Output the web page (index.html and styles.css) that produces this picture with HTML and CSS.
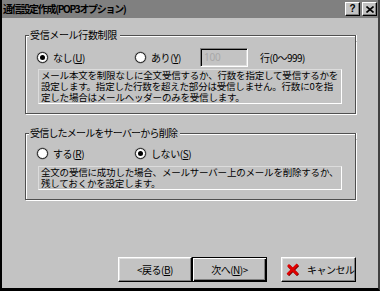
FILE: index.html
```html
<!DOCTYPE html>
<html lang="ja">
<head>
<meta charset="utf-8">
<title>通信設定作成(POP3オプション)</title>
<link rel="stylesheet" href="styles.css">
</head>
<body>
<div class="window">
  <div class="titlebar">
    <span class="title">通信設定作成(POP3オプション)</span>
    <div class="tbtns">
      <span class="tbtn">?</span>
      <span class="tbtn">
        <svg width="8" height="7" viewBox="0 0 8 7"><path d="M0.5 0.5 L7.5 6.5 M7.5 0.5 L0.5 6.5" stroke="#000" stroke-width="1.6" fill="none"/></svg>
      </span>
    </div>
  </div>
  <div class="body">
    <section class="group g1">
      <div class="ghead"><span class="corner"></span><span class="gtitle">受信メール行数制限</span><span class="gline"></span></div>
      <div class="gbox">
        <div class="row r1">
          <label class="radio w1"><span class="dot checked"></span><span class="lbl">なし(<u>U</u>)</span></label>
          <label class="radio w2"><span class="dot"></span><span class="lbl">あり(<u>Y</u>)</span></label>
          <span class="input">100</span>
          <span class="unit">行(0〜999)</span>
        </div>
        <div class="desc">メール本文を制限なしに全文受信するか、行数を指定して受信するかを<br>設定します。指定した行数を超えた部分は受信しません。行数に0を指<br>定した場合はメールヘッダーのみを受信します。</div>
      </div>
    </section>
    <section class="group g2">
      <div class="ghead"><span class="corner"></span><span class="gtitle">受信したメールをサーバーから削除</span><span class="gline"></span></div>
      <div class="gbox">
        <div class="row r2">
          <label class="radio w1"><span class="dot"></span><span class="lbl">する(<u>R</u>)</span></label>
          <label class="radio w2"><span class="dot checked"></span><span class="lbl">しない(<u>S</u>)</span></label>
        </div>
        <div class="desc">全文の受信に成功した場合、メールサーバー上のメールを削除するか、<br>残しておくかを設定します。</div>
      </div>
    </section>
    <div class="footer">
      <button class="btn back"><span>&lt;戻る(<u>B</u>)</span></button>
      <button class="btn next"><span>次へ(<u>N</u>)&gt;</span></button>
      <button class="btn cancel">
        <svg class="xicon" width="13" height="13" viewBox="0 0 13 13"><path d="M2 2 L11.5 11.5 M11.5 1.5 L1.5 11.5" stroke="#7a0000" stroke-width="3" fill="none" transform="translate(0.6 0.6)"/><path d="M2 2 L11.5 11.5 M11.5 1.5 L1.5 11.5" stroke="#e00000" stroke-width="2.6" fill="none"/></svg>
        <span>キャンセル</span>
      </button>
    </div>
  </div>
</div>
</body>
</html>
```

FILE: styles.css
```css
html, body {
  margin: 0;
  padding: 0;
}

body {
  width: 380px;
  height: 291px;
  overflow: hidden;
  background: #c3c3c3;
  font-family: "Noto Sans CJK JP", "Noto Sans", sans-serif;
  font-size: 10px;
  color: #000;
  letter-spacing: -0.5px;
}

.window {
  box-sizing: border-box;
  width: 380px;
  height: 291px;
  background: #c3c3c3;
  border-left: 2px solid #000;
  border-right: 2px solid #404040;
  border-bottom: 3px solid #000;
  display: flex;
  flex-direction: column;
}

.titlebar {
  height: 18px;
  flex: none;
  background: #808080;
  display: flex;
  align-items: center;
  justify-content: space-between;
  padding: 0 1px 0 1px;
}

.title {
  font-weight: bold;
  font-size: 10px;
  letter-spacing: -1.3px;
  line-height: 12px;
  color: #000;
}

.tbtns {
  display: flex;
  gap: 2px;
}

.tbtn {
  box-sizing: border-box;
  width: 15px;
  height: 14px;
  background: #c3c3c3;
  border: 1px solid;
  border-color: #fff #000 #000 #fff;
  box-shadow: inset -1px -1px 0 #808080;
  display: flex;
  align-items: center;
  justify-content: center;
  font-family: "Liberation Sans", sans-serif;
  font-weight: bold;
  font-size: 10px;
  letter-spacing: 0;
  line-height: 1;
}

.body {
  flex: 1;
  display: flex;
  flex-direction: column;
  padding: 11px 22px 6px 23px;
}

.group {
  display: flex;
  flex-direction: column;
}

.ghead {
  display: flex;
  height: 12px;
}

.corner,
.gline {
  align-self: flex-end;
  height: 6px;
  box-sizing: border-box;
  border-top: 1px solid #505050;
}

.corner {
  flex: none;
  width: 4px;
  border-left: 1px solid #505050;
  box-shadow: inset 1px 1px 0 #fff;
}

.gline {
  flex: 1 1 0;
  min-width: 0;
  margin-left: 2px;
  border-right: 1px solid #505050;
  box-shadow: 1px 0 0 #fff, inset 0 1px 0 #fff;
}

.gtitle {
  flex: none;
  padding: 0 1px;
  line-height: 12px;
  font-size: 10px;
  letter-spacing: -0.35px;
  white-space: nowrap;
}

.g2 .gtitle {
  letter-spacing: -0.8px;
}

.gbox {
  border: 1px solid #505050;
  border-top: none;
  box-shadow: 1px 1px 0 #fff, inset 1px 0 0 #fff;
  padding: 7px 13px 9px 11px;
}

.g2 {
  margin-top: 13px;
}

.g2 .gbox {
  padding-top: 6px;
}

.row {
  display: flex;
  align-items: center;
}

.r1 {
  height: 19px;
}

.r2 {
  height: 17px;
}

.radio {
  display: flex;
  align-items: center;
  gap: 5px;
  line-height: 12px;
  white-space: nowrap;
}

.lbl {
  letter-spacing: -0.4px;
}

.w1 {
  width: 98px;
}

.w2 {
  width: 65px;
}

.dot {
  box-sizing: border-box;
  width: 11px;
  height: 11px;
  border-radius: 50%;
  background: #fff;
  border: 1px solid #202020;
  box-shadow: 0 0 0 0.5px #808080;
  display: flex;
  align-items: center;
  justify-content: center;
  flex: none;
}

.dot.checked::after {
  content: "";
  width: 5px;
  height: 5px;
  border-radius: 50%;
  background: #000;
}

.input {
  box-sizing: border-box;
  width: 48px;
  height: 19px;
  border: 1px solid;
  border-color: #808080 #fff #fff #808080;
  box-shadow: inset 1px 1px 0 #000, inset -1px -1px 0 #dcdcdc;
  padding: 2px 0 0 3px;
  color: #a8a8a8;
  font-family: "Noto Sans", sans-serif;
  font-size: 10px;
  line-height: 13px;
  letter-spacing: -0.2px;
}

.unit {
  margin-left: 12px;
  line-height: 12px;
  white-space: nowrap;
}

.desc {
  margin: 2px 0 0 1px;
  border: 1px solid;
  border-color: #dcdcdc #fff #fff #dcdcdc;
  padding: 0 2px;
  font-size: 9.5px;
  line-height: 11px;
  letter-spacing: -0.2px;
  white-space: nowrap;
  overflow: hidden;
}

.g2 .desc {
  margin-top: 4px;
}

.footer {
  margin-top: auto;
  display: flex;
  justify-content: flex-end;
}

.btn {
  box-sizing: border-box;
  height: 25px;
  width: 75px;
  margin: 0;
  padding: 0;
  background: #c3c3c3;
  border: 1px solid;
  border-color: #fff #000 #000 #fff;
  box-shadow: inset -1px -1px 0 #808080, inset 1px 1px 0 #dfdfdf;
  font-family: inherit;
  font-size: 10px;
  letter-spacing: -0.5px;
  color: #000;
  display: flex;
  align-items: center;
  justify-content: center;
  line-height: 12px;
}

.back {
  width: 74px;
}

.next {
  border: 1px solid #000;
  box-shadow: inset 1px 1px 0 #fff, inset -1px -1px 0 #000, inset -2px -2px 0 #808080;
}

.cancel {
  margin-left: 14px;
  justify-content: flex-start;
  padding-left: 4px;
  gap: 8px;
}

.xicon {
  flex: none;
}
```
